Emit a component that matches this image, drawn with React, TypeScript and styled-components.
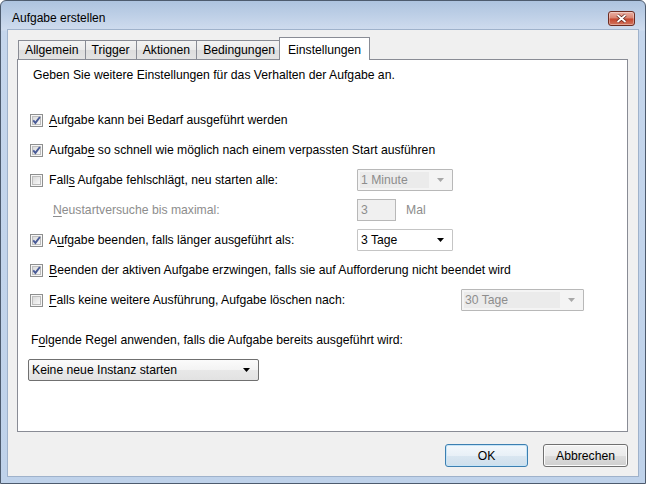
import React from "react";
import styled, { createGlobalStyle } from "styled-components";

const GlobalStyle = createGlobalStyle`
    body {
        margin: 0;
        background: #ffffff;
        font-family: "Segoe UI", "Liberation Sans", Arial, sans-serif;
        font-size: 12.2px;
        color: #000;
    }
`;

const Window = styled.div`
    width: 646px;
    height: 484px;
    box-sizing: border-box;
    border: 1px solid #4d5b6e;
    border-radius: 6px 6px 0 0;
    background: linear-gradient(#adc3df, #cfdcee 29px, #c5d6ec 30px, #bfd2ea);
    display: flex;
    flex-direction: column;
    overflow: hidden;
`;

const TitleBar = styled.div`
    height: 29px;
    box-sizing: border-box;
    padding: 5px 10px 0 11px;
    display: flex;
    align-items: center;
    justify-content: space-between;
    font-size: 12px;
`;

const CloseButton = styled.div`
    width: 27px;
    height: 15px;
    box-sizing: border-box;
    border: 1px solid #6e2c21;
    border-radius: 3px;
    background: linear-gradient(#eab0a4, #d98370 48%, #c5452d 52%, #d2765f);
    box-shadow: inset 0 0 0 1px rgba(255, 255, 255, 0.35);
    display: flex;
    align-items: center;
    justify-content: center;
`;

const Client = styled.div`
    flex: 1;
    margin: 0 7px 7px 7px;
    background: #f0f0f0;
    box-shadow: 0 0 0 1px #9fb2cb;
    padding: 7px 10px 0 9px;
    display: flex;
    flex-direction: column;
`;

const TabStrip = styled.div`
    display: flex;
    align-items: flex-end;
    height: 23px;
    padding-left: 1px;
    margin-bottom: -1px;
    position: relative;
    z-index: 1;
`;

const Tab = styled.div<{ $active?: boolean }>`
    box-sizing: border-box;
    height: ${(p) => (p.$active ? 23 : 20)}px;
    padding: ${(p) => (p.$active ? "2px 8px 0" : "0 6px")};
    margin: ${(p) => (p.$active ? "0 -2px 0 -3px" : "0 0 0 -1px")};
    border: 1px solid #898c95;
    border-bottom: ${(p) => (p.$active ? "none" : "1px solid #898c95")};
    background: ${(p) =>
        p.$active ? "#ffffff" : "linear-gradient(#f3f3f3, #ebebeb 50%, #dddddd 51%, #e3e3e3)"};
    display: flex;
    align-items: center;
    position: relative;
    z-index: ${(p) => (p.$active ? 2 : 1)};
    white-space: nowrap;
    &:first-child {
        margin-left: 0;
    }
`;

const Panel = styled.div`
    flex: 1;
    background: #ffffff;
    border: 1px solid #898c95;
    padding: 7px 0 0 10px;
`;

const Intro = styled.div`
    line-height: 16px;
    margin-left: 5px;
    margin-bottom: 22px;
`;

const Row = styled.div`
    display: flex;
    align-items: center;
    height: 30px;
    margin-left: 2px;
`;

const Label = styled.label<{ $width: number; $indent?: number; $disabled?: boolean }>`
    flex: 0 0 ${(p) => p.$width}px;
    box-sizing: border-box;
    padding-left: ${(p) => p.$indent ?? 0}px;
    display: flex;
    align-items: center;
    gap: 6px;
    color: ${(p) => (p.$disabled ? "#8d8d8d" : "#000")};
    white-space: nowrap;
`;

const Key = styled.span`
    text-decoration: underline;
    text-underline-offset: 2px;
`;

const Select = styled.div<{ $width: number; $disabled?: boolean; $button?: boolean }>`
    width: ${(p) => p.$width}px;
    height: 22px;
    box-sizing: border-box;
    border: 1px solid ${(p) => (p.$button ? "#707070" : p.$disabled ? "#b8b8b8" : "#c5c5c5")};
    border-radius: ${(p) => (p.$button ? 2 : 1)}px;
    background: ${(p) =>
        p.$button
            ? "linear-gradient(#fbfbfb, #f3f3f3 50%, #e8e8e8 51%, #e2e2e2)"
            : p.$disabled
            ? "#f4f4f4"
            : "#ffffff"};
    color: ${(p) => (p.$disabled ? "#8d8d8d" : "#000")};
    display: flex;
    align-items: center;
    gap: 8px;
    padding: 2px 8px 2px 2px;
`;

const SelectValue = styled.span<{ $disabled?: boolean }>`
    flex: 1;
    align-self: stretch;
    display: flex;
    align-items: center;
    padding-left: 1px;
    background: ${(p) => (p.$disabled ? "#ebebeb" : "transparent")};
`;

const NumberBox = styled.div`
    width: 39px;
    height: 22px;
    box-sizing: border-box;
    border: 1px solid #b8b8b8;
    background: #f0f0f0;
    color: #8d8d8d;
    padding-left: 3px;
    display: flex;
    align-items: center;
`;

const Unit = styled.span`
    color: #8d8d8d;
    margin-left: 10px;
`;

const RuleText = styled.div`
    line-height: 16px;
    margin: 17px 0 11px 3px;
`;

const Footer = styled.div`
    height: 44px;
    box-sizing: border-box;
    padding-top: 12px;
    display: flex;
    justify-content: flex-end;
    gap: 15px;
`;

const Button = styled.button<{ $default?: boolean; $width: number }>`
    width: ${(p) => p.$width}px;
    height: 23px;
    box-sizing: border-box;
    font: inherit;
    color: #000;
    border: 1px solid ${(p) => (p.$default ? "#3c7fb1" : "#707070")};
    border-radius: 3px;
    background: ${(p) =>
        p.$default
            ? "linear-gradient(#f3f8fc, #e8f0f7 50%, #d9e6f1 51%, #cfdfec)"
            : "linear-gradient(#f2f2f2, #ebebeb 50%, #dddddd 51%, #cfcfcf)"};
    box-shadow: inset 0 0 0 1px ${(p) => (p.$default ? "#c6e4f7" : "#fcfcfc")};
    padding: 0;
`;

const CheckBox = ({ checked }: { checked?: boolean }) => (
    <svg width="13" height="13" viewBox="0 0 13 13" style={{ flex: "none" }}>
        <defs>
            <linearGradient id="cb-fill" x1="0" y1="0" x2="1" y2="1">
                <stop offset="0" stopColor="#d8d8d8" />
                <stop offset="1" stopColor="#fafafa" />
            </linearGradient>
        </defs>
        <rect x="0.5" y="0.5" width="12" height="12" fill="#f6f6f6" stroke="#8e8f8f" />
        <rect x="2.5" y="2.5" width="8" height="8" fill="url(#cb-fill)" stroke="#bdbdbd" />
        {checked && (
            <path d="M3.2 6.4 L5.4 8.9 L9.9 3" fill="none" stroke="#4a5c98" strokeWidth="1.9" />
        )}
    </svg>
);

const Arrow = ({ color }: { color: string }) => (
    <svg width="7" height="4" viewBox="0 0 7 4" style={{ flex: "none" }}>
        <path d="M0 0 H7 L3.5 4 Z" fill={color} />
    </svg>
);

const tabs = ["Allgemein", "Trigger", "Aktionen", "Bedingungen", "Einstellungen"];

export default function App() {
    return (
        <>
            <GlobalStyle />
            <Window>
                <TitleBar>
                    <span>Aufgabe erstellen</span>
                    <CloseButton>
                        <svg width="11" height="9" viewBox="0 0 11 9">
                            <path d="M1.5 1 L9.5 8 M9.5 1 L1.5 8" stroke="#5a1d14" strokeWidth="3.2" />
                            <path d="M1.5 1 L9.5 8 M9.5 1 L1.5 8" stroke="#ffffff" strokeWidth="1.8" />
                        </svg>
                    </CloseButton>
                </TitleBar>
                <Client>
                    <TabStrip>
                        {tabs.map((t) => (
                            <Tab key={t} $active={t === "Einstellungen"}>
                                {t}
                            </Tab>
                        ))}
                    </TabStrip>
                    <Panel>
                        <Intro>Geben Sie weitere Einstellungen für das Verhalten der Aufgabe an.</Intro>
                        <Row>
                            <Label $width={500}>
                                <CheckBox checked />
                                <span>
                                    <Key>A</Key>ufgabe kann bei Bedarf ausgeführt werden
                                </span>
                            </Label>
                        </Row>
                        <Row>
                            <Label $width={500}>
                                <CheckBox checked />
                                <span>
                                    Aufgab<Key>e</Key> so schnell wie möglich nach einem verpassten Start ausführen
                                </span>
                            </Label>
                        </Row>
                        <Row>
                            <Label $width={327}>
                                <CheckBox />
                                <span>
                                    Fall<Key>s</Key> Aufgabe fehlschlägt, neu starten alle:
                                </span>
                            </Label>
                            <Select $width={96} $disabled>
                                <SelectValue $disabled>1 Minute</SelectValue>
                                <Arrow color="#a8a8a8" />
                            </Select>
                        </Row>
                        <Row>
                            <Label $width={327} $indent={23} $disabled>
                                <span>
                                    <Key>N</Key>eustartversuche bis maximal:
                                </span>
                            </Label>
                            <NumberBox>3</NumberBox>
                            <Unit>Mal</Unit>
                        </Row>
                        <Row>
                            <Label $width={327}>
                                <CheckBox checked />
                                <span>
                                    A<Key>u</Key>fgabe beenden, falls länger ausgeführt als:
                                </span>
                            </Label>
                            <Select $width={96}>
                                <SelectValue>3 Tage</SelectValue>
                                <Arrow color="#000" />
                            </Select>
                        </Row>
                        <Row>
                            <Label $width={590}>
                                <CheckBox checked />
                                <span>
                                    <Key>B</Key>eenden der aktiven Aufgabe erzwingen, falls sie auf Aufforderung nicht beendet wird
                                </span>
                            </Label>
                        </Row>
                        <Row>
                            <Label $width={431}>
                                <CheckBox />
                                <span>
                                    <Key>F</Key>alls keine weitere Ausführung, Aufgabe löschen nach:
                                </span>
                            </Label>
                            <Select $width={123} $disabled>
                                <SelectValue $disabled>30 Tage</SelectValue>
                                <Arrow color="#a8a8a8" />
                            </Select>
                        </Row>
                        <RuleText>
                            F<Key>o</Key>lgende Regel anwenden, falls die Aufgabe bereits ausgeführt wird:
                        </RuleText>
                        <Select $width={231} $button>
                            <SelectValue>Keine neue Instanz starten</SelectValue>
                            <Arrow color="#000" />
                        </Select>
                    </Panel>
                    <Footer>
                        <Button $default $width={83}>
                            OK
                        </Button>
                        <Button $width={85}>Abbrechen</Button>
                    </Footer>
                </Client>
            </Window>
        </>
    );
}
